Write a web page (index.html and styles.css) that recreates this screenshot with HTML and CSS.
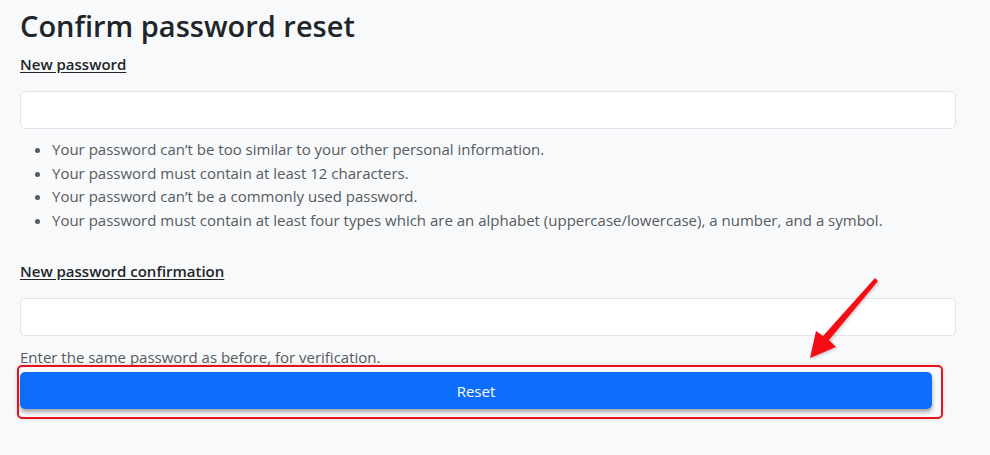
FILE: index.html
```html
<!DOCTYPE html>
<html lang="en">
<head>
<meta charset="utf-8">
<title>Confirm password reset</title>
<link rel="stylesheet" href="styles.css">
</head>
<body>
<main class="page">
  <h1 class="title">Confirm password reset</h1>
  <form class="form">
    <div class="field">
      <label class="label" for="p1">New password</label>
      <input class="input" id="p1" type="password">
      <ul class="help-list">
        <li>Your password can’t be too similar to your other personal information.</li>
        <li>Your password must contain at least 12 characters.</li>
        <li>Your password can’t be a commonly used password.</li>
        <li>Your password must contain at least four types which are an alphabet (uppercase/lowercase), a number, and a symbol.</li>
      </ul>
    </div>
    <div class="field field-second">
      <label class="label" for="p2">New password confirmation</label>
      <input class="input" id="p2" type="password">
      <div class="help">Enter the same password as before, for verification.</div>
    </div>
    <div class="submit-wrap">
      <button class="btn" type="button">Reset</button>
      <span class="highlight"></span>
    </div>
  </form>
</main>
<svg class="arrow" width="990" height="455" viewBox="0 0 990 455">
  <defs>
    <filter id="sh" x="-20%" y="-20%" width="140%" height="140%">
      <feDropShadow dx="1" dy="1" stdDeviation="1.5" flood-color="#000" flood-opacity="0.25"/>
    </filter>
  </defs>
  <polygon filter="url(#sh)" fill="#f50f17" points="875,278 878,281 829,340 836,347 810,358 816,331 823,336"/>
</svg>
</body>
</html>
```
FILE: styles.css
```css
html, body {
  margin: 0;
  padding: 0;
}
body {
  background: #f8f9fa;
  font-family: "Open Sans", "Noto Sans", sans-serif;
  color: #212529;
  width: 990px;
  height: 455px;
  overflow: hidden;
  position: relative;
}
.page {
  padding: 6px 34px 0 20px;
}
.title {
  margin: 0;
  font-size: 29px;
  font-weight: 600;
  line-height: 40px;
  color: #212529;
}
.form {
  margin-top: 7px;
}
.label {
  display: block;
  font-size: 15px;
  font-weight: 600;
  line-height: 22px;
  text-decoration: underline;
  text-underline-offset: 2px;
  color: #212529;
}
.input {
  display: block;
  box-sizing: border-box;
  width: 100%;
  height: 38px;
  margin-top: 16px;
  border: 1px solid #e1e4e8;
  border-radius: 5px;
  background: #fff;
}
.help-list {
  margin: 9px 0 0;
  padding-left: 32px;
  font-size: 15px;
  line-height: 23.5px;
  color: #555b61;
}
.field-second {
  margin-top: 28px;
}
.help {
  margin-top: 11px;
  font-size: 15px;
  line-height: 20px;
  color: #555b61;
}
.submit-wrap {
  position: relative;
  margin-top: 5px;
  width: 912px;
}
.btn {
  display: block;
  width: 912px;
  height: 37px;
  border: 0;
  border-radius: 5px;
  background: #0d6efd;
  color: #fff;
  font-family: inherit;
  font-size: 15px;
  box-shadow: 0 3px 4px rgba(0, 0, 0, 0.35);
}
.highlight {
  position: absolute;
  left: -3px;
  top: -7px;
  right: -11px;
  bottom: -10px;
  border: 2px solid #e8121c;
  border-radius: 5px;
  box-shadow: 0 0 4px rgba(0, 0, 0, 0.15);
  pointer-events: none;
}
.arrow {
  position: absolute;
  left: 0;
  top: 0;
  pointer-events: none;
}
```
